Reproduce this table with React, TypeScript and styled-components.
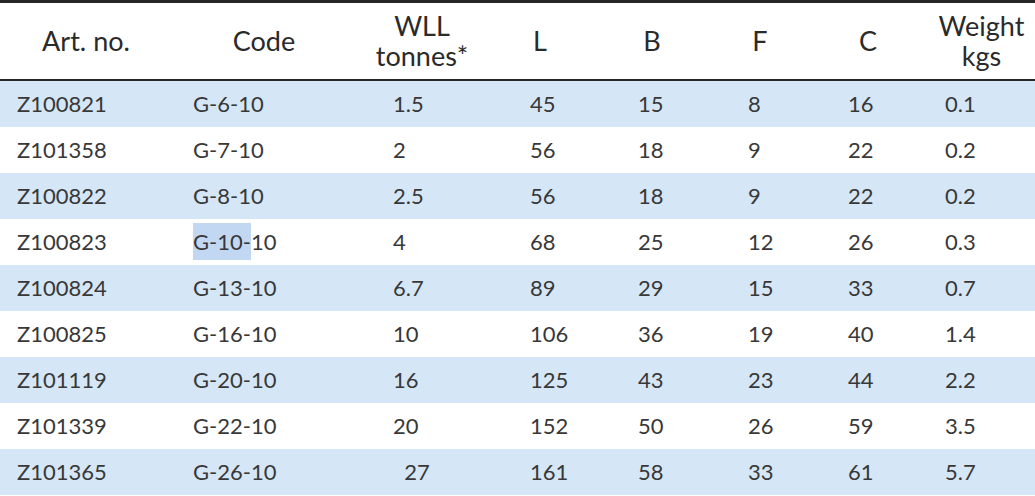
import React from 'react';
import styled, { createGlobalStyle } from 'styled-components';

const GlobalStyle = createGlobalStyle`
  html, body {
    margin: 0;
    padding: 0;
    background: #fff;
  }
  body {
    font-family: Lato, 'Open Sans', sans-serif;
    color: #333;
  }
`;

const columns = [
  { key: 'art', title: ['Art. no.'], width: 172, pad: 17 },
  { key: 'code', title: ['Code'], width: 184, pad: 21 },
  { key: 'wll', title: ['WLL', 'tonnes*'], width: 132, pad: 37 },
  { key: 'l', title: ['L'], width: 104, pad: 42 },
  { key: 'b', title: ['B'], width: 120, pad: 46 },
  { key: 'f', title: ['F'], width: 96, pad: 36 },
  { key: 'c', title: ['C'], width: 120, pad: 40 },
  { key: 'w', title: ['Weight', 'kgs'], width: 107, pad: 17 },
];

const rows = [
  ['Z100821', 'G-6-10', '1.5', '45', '15', '8', '16', '0.1'],
  ['Z101358', 'G-7-10', '2', '56', '18', '9', '22', '0.2'],
  ['Z100822', 'G-8-10', '2.5', '56', '18', '9', '22', '0.2'],
  ['Z100823', 'G-10-10', '4', '68', '25', '12', '26', '0.3'],
  ['Z100824', 'G-13-10', '6.7', '89', '29', '15', '33', '0.7'],
  ['Z100825', 'G-16-10', '10', '106', '36', '19', '40', '1.4'],
  ['Z101119', 'G-20-10', '16', '125', '43', '23', '44', '2.2'],
  ['Z101339', 'G-22-10', '20', '152', '50', '26', '59', '3.5'],
  ['Z101365', 'G-26-10', '  27', '161', '58', '33', '61', '5.7'],
];

const Table = styled.table`
  width: 1035px;
  border-collapse: collapse;
  table-layout: fixed;
  border-top: 3px solid #262626;
`;

const HeadRow = styled.tr`
  height: 78px;
  border-bottom: 2px solid #262626;
`;

const HeadCell = styled.th`
  padding: 0;
  font-weight: 400;
  font-size: 27px;
  line-height: 30px;
  text-align: center;
  vertical-align: middle;
  color: #2a2a2a;
`;

const HeadLine = styled.div`
  display: block;
`;

const BodyRow = styled.tr<{ $shaded: boolean }>`
  height: 46px;
  background: ${(p) => (p.$shaded ? '#d5e7f6' : '#fff')};
`;

const Cell = styled.td<{ $pad: number }>`
  padding: 0 0 0 ${(p) => p.$pad}px;
  font-size: 22px;
  line-height: 46px;
  white-space: pre;
  color: #383838;
  vertical-align: middle;
`;

const Selected = styled.span`
  background: #c2d8f2;
  padding: 5px 0;
`;

export default function App() {
  return (
    <>
      <GlobalStyle />
      <Table>
        <colgroup>
          {columns.map((c) => (
            <col key={c.key} style={{ width: c.width }} />
          ))}
        </colgroup>
        <thead>
          <HeadRow>
            {columns.map((c) => (
              <HeadCell key={c.key}>
                {c.title.map((t) => (
                  <HeadLine key={t}>{t}</HeadLine>
                ))}
              </HeadCell>
            ))}
          </HeadRow>
        </thead>
        <tbody>
          {rows.map((r, i) => (
            <BodyRow key={r[0]} $shaded={i % 2 === 0}>
              {r.map((v, j) => (
                <Cell key={j} $pad={columns[j].pad}>
                  {v === 'G-10-10' ? (
                    <>
                      <Selected>G-10-</Selected>10
                    </>
                  ) : (
                    v
                  )}
                </Cell>
              ))}
            </BodyRow>
          ))}
        </tbody>
      </Table>
    </>
  );
}
